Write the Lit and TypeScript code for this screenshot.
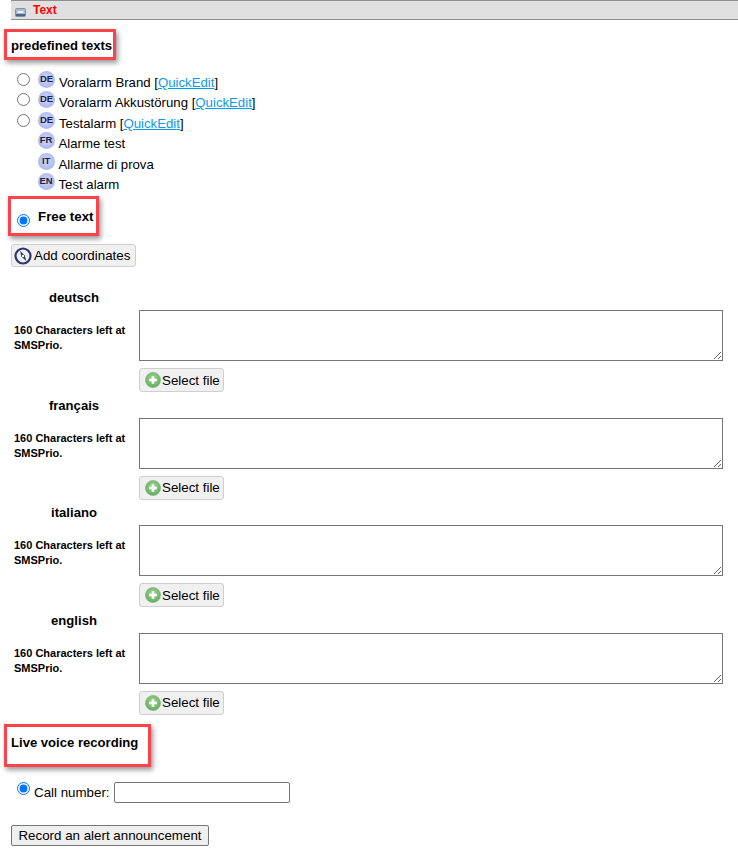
import { LitElement, html, css, svg } from "lit";
import { customElement } from "lit/decorators.js";

const badge = (t: string) => html`<span class="badge">${t}</span>`;

const compass = html`<svg class="ico-compass" viewBox="0 0 18 18" width="18" height="18">
  <circle cx="9" cy="9" r="7.5" fill="#eef0f8" stroke="#2f3566" stroke-width="2.2"/>
  <path d="M6 3.8 L7.4 9.6 L12.4 14.2 L10.6 8.2 Z" fill="#2f3566"/>
  <circle cx="9" cy="9" r="1.2" fill="#fff"/>
</svg>`;

const plus = html`<svg class="ico-plus" viewBox="0 0 16 16" width="16" height="16">
  <defs><radialGradient id="g" cx="50%" cy="40%" r="60%"><stop offset="0" stop-color="#a5d79a"/><stop offset="1" stop-color="#62ab5c"/></radialGradient></defs>
  <circle cx="8" cy="8" r="7.6" fill="url(#g)" stroke="#7fb67a" stroke-width=".6"/>
  <path d="M8 4.2V11.8M4.2 8H11.8" stroke="#fff" stroke-width="2.6"/>
</svg>`;

const minus = svg`<rect x=".5" y=".5" width="10" height="8" rx="1" fill="#a9b9cf" stroke="#7f90a8"/><rect x="1" y="6" width="9" height="2" fill="#4f6484"/><path d="M2.5 4h6" stroke="#fff" stroke-width="1.6"/>`;

@customElement("app-root")
export class AppRoot extends LitElement {
  static styles = css`
    :host { display: block; width: 738px; height: 855px; overflow: hidden; font-family: "Liberation Sans", Arial, sans-serif; font-size: 13.2px; color: #000; background: #fff; }
    .bar { margin-left: 11px; height: 20px; box-sizing: border-box; background: #e0e0e0; border-top: 1px solid #8c8c8c; border-bottom: 1px solid #8c8c8c; display: flex; align-items: center; padding-left: 4px; gap: 7px; color: #f00; font-weight: bold; font-size: 12px; }
    .bar svg { margin-top: 5px; }
    .bar span { margin-top: -1px; }
    .mark { box-sizing: border-box; width: fit-content; border: 3px solid #f8444a; box-shadow: 2px 3px 5px rgba(0,0,0,.4); font-weight: bold; font-size: 13.1px; }
    .mark-a { margin: 9px 0 0 4px; width: 112px; height: 31px; padding: 5px 0 0 4px; line-height: 18px; white-space: nowrap; }
    .rows { margin-top: 10.8px; height: 125.7px; }
    .row { display: flex; align-items: flex-start; height: 20.5px; white-space: nowrap; }
    .rad { width: 13px; height: 13px; margin: 2px 8px 0 17px; flex: none; accent-color: #0075ff; }
    .spacer { width: 37.5px; flex: none; }
    .badge { flex: none; box-sizing: border-box; width: 17px; height: 17px; border-radius: 50%; background: radial-gradient(circle at 50% 45%, #d3daf8 0, #a9b6ef 75%, #9aa8e6 100%); font-size: 9.5px; font-weight: bold; line-height: 15px; text-align: center; color: #1c2340; letter-spacing: -.2px; }
    .tx { margin: 3px 0 0 4px; line-height: 18px; }
    a { color: #0a9be8; text-decoration: underline; }
    .mark-b { margin: 0 0 0 8px; width: 91px; height: 40px; display: flex; align-items: flex-start; white-space: nowrap; }
    .mark-b .rad { margin: 15px 8px 0 6px; }
    .mark-b span { margin-top: 9px; line-height: 18px; font-size: 13.33px; }
    .btn { box-sizing: border-box; display: flex; align-items: center; font: 13.33px "Liberation Sans", Arial, sans-serif; color: #000; background: #f0f0f0; border: 1px solid #cfcfcf; border-radius: 3px; padding: 0 3px; white-space: nowrap; }
    .coords { margin: 8px 0 0 11px; height: 23px; width: 125px; padding-left: 2px; }
    .ico-compass { margin-right: 2px; flex: none; }
    .ico-plus { margin-right: 1px; margin-left: 3px; flex: none; }
    .langs { margin-top: 22px; }
    .lang { display: grid; grid-template-columns: 128px 584px; column-gap: 0; height: 107.5px; padding-left: 11px; box-sizing: border-box; grid-template-rows: 18px auto; }
    .name { font-weight: bold; font-size: 13.1px; text-align: center; line-height: 18px; grid-column: 1; width: 126px; }
    .side { grid-column: 1; font-size: 11px; font-weight: bold; line-height: 15px; padding: 16px 0 0 3px; width: 122px; }
    .field { grid-column: 2; grid-row: 1 / span 2; padding-top: 21px; }
    textarea { display: block; box-sizing: border-box; width: 584px; height: 51px; margin: 0; border: 1px solid #767676; border-radius: 0; background: #fff; padding: 2px; }
    .file { margin-top: 7px; height: 24px; width: 85px; padding-left: 2px; }
    .mark-c { margin: 4.5px 0 0 4px; width: 147px; height: 43px; padding: 7px 0 0 4px; line-height: 18px; white-space: nowrap; }
    .call { display: flex; align-items: flex-start; margin-top: 15px; height: 21px; }
    .call .rad { margin: 0 4px 0 17px; }
    .call label { margin-top: 3px; line-height: 16px; font-size: 13.33px; }
    .call .num { box-sizing: border-box; width: 176px; height: 21px; margin: 0 0 0 4px; border: 1px solid #767676; border-radius: 2px; padding: 1px 2px; }
    .record { display: block; box-sizing: border-box; margin: 22px 0 0 11px; width: 198px; height: 21px; font: 13.33px "Liberation Sans", Arial, sans-serif; background: #efefef; border: 1px solid #767676; border-radius: 2px; padding: 0; color: #000; }
  `;

  render() {
    const q = html`[<a href="#">QuickEdit</a>]`;
    const langs = ["deutsch", "français", "italiano", "english"];
    return html`
      <div class="bar"><svg width="11" height="9" viewBox="0 0 11 9">${minus}</svg><span>Text</span></div>
      <div class="mark mark-a">predefined texts</div>
      <div class="rows">
        <div class="row"><input class="rad" type="radio" name="p" />${badge("DE")}<span class="tx">Voralarm Brand ${q}</span></div>
        <div class="row"><input class="rad" type="radio" name="p" />${badge("DE")}<span class="tx">Voralarm Akkustörung ${q}</span></div>
        <div class="row"><input class="rad" type="radio" name="p" />${badge("DE")}<span class="tx">Testalarm ${q}</span></div>
        <div class="row"><span class="spacer"></span>${badge("FR")}<span class="tx">Alarme test</span></div>
        <div class="row"><span class="spacer"></span>${badge("IT")}<span class="tx">Allarme di prova</span></div>
        <div class="row"><span class="spacer"></span>${badge("EN")}<span class="tx">Test alarm</span></div>
      </div>
      <div class="mark mark-b"><input class="rad" type="radio" name="p" checked /><span>Free text</span></div>
      <button class="btn coords">${compass}Add coordinates</button>
      <div class="langs">
        ${langs.map(
          (l) => html`<div class="lang">
            <div class="name">${l}</div>
            <div class="side">160 Characters left at SMSPrio.</div>
            <div class="field">
              <textarea></textarea>
              <button class="btn file">${plus}Select file</button>
            </div>
          </div>`
        )}
      </div>
      <div class="mark mark-c">Live voice recording</div>
      <div class="call"><input class="rad" type="radio" checked /><label>Call number:</label><input class="num" type="text" /></div>
      <button class="record">Record an alert announcement</button>
    `;
  }
}
